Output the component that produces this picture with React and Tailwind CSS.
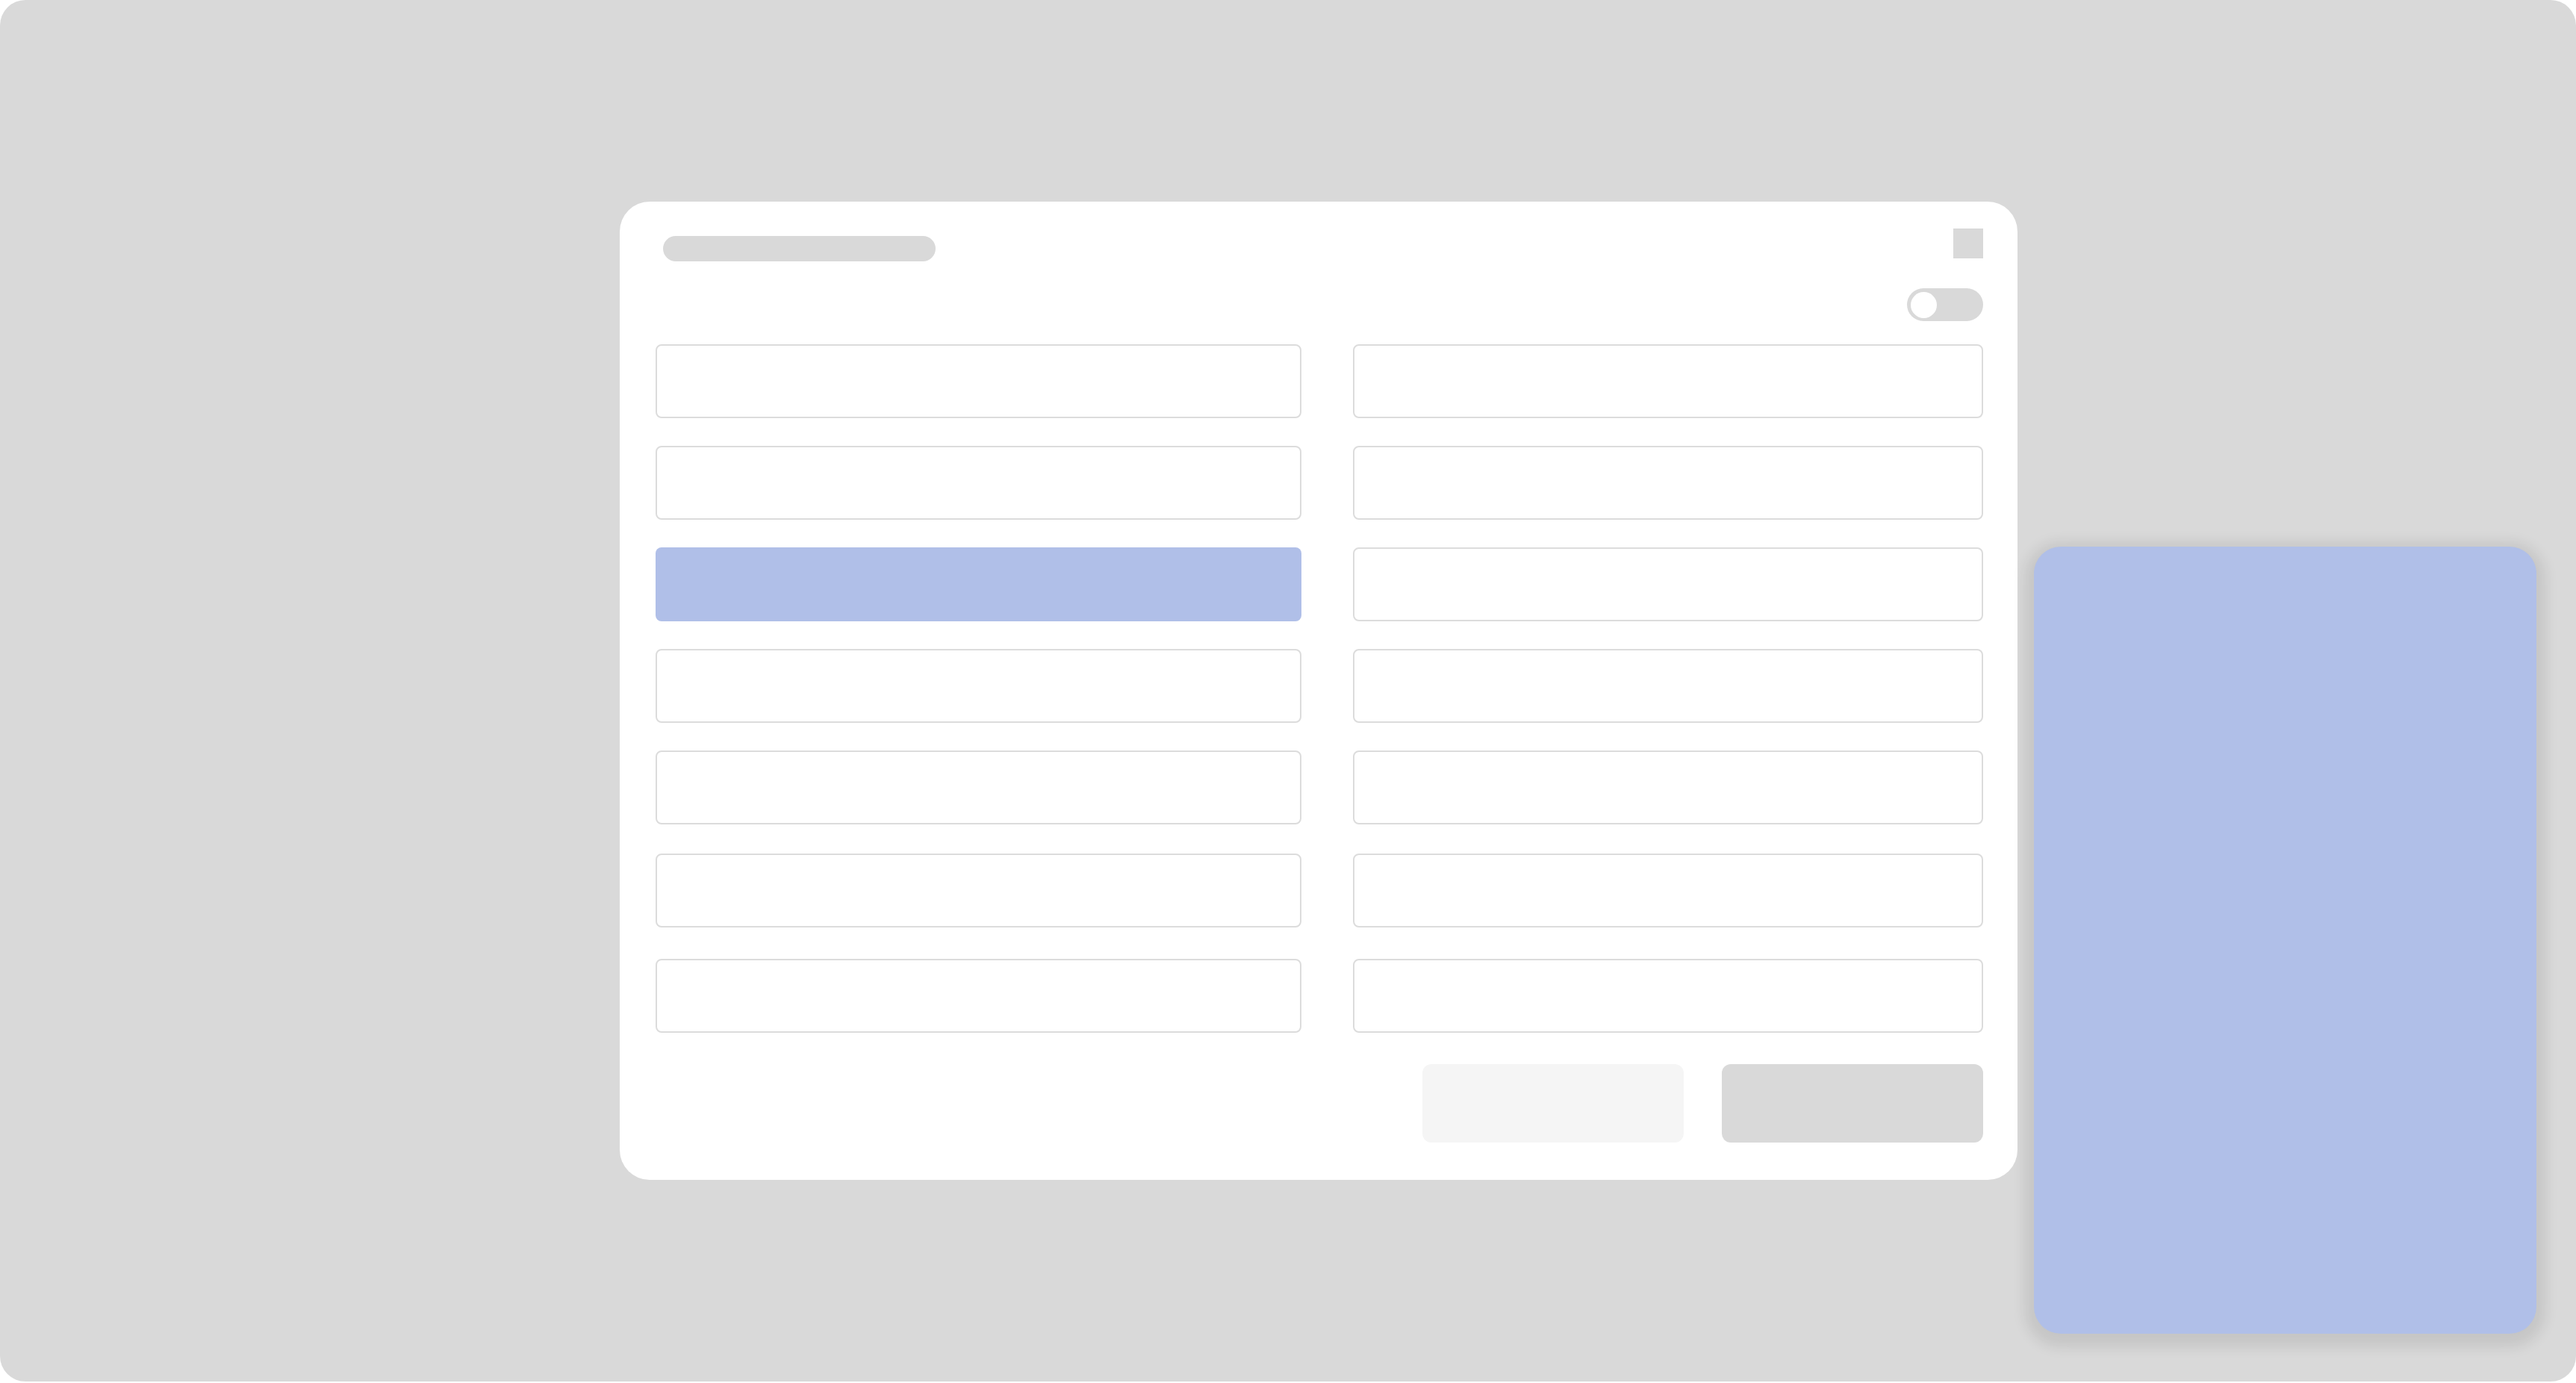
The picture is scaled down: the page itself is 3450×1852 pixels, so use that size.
export default function App() {
  const rows = [0, 1, 2, 3, 4, 5, 6];

  return (
    <div className="w-[3450px] h-[1852px] bg-white">
      <div className="w-[3450px] h-[1850px] bg-[#d9d9d9] rounded-[34px] flex items-start pt-[270px] pl-[830px]">
        {/* modal */}
        <div className="w-[1872px] h-[1310px] bg-white rounded-[40px] pl-[48px] pr-[46px] pt-[36px] flex flex-col">
          <div className="flex justify-between items-start">
            <div className="ml-[10px] mt-[10px] w-[365px] h-[34px] rounded-full bg-[#d9d9d9]" />
            <div className="w-[40px] h-[40px] bg-[#d9d9d9]" />
          </div>
          <div className="flex justify-end mt-[36px]">
            <div className="w-[102px] h-[44px] rounded-full bg-[#d9d9d9] pl-[5px] flex items-center">
              <div className="w-[35px] h-[35px] rounded-full bg-white" />
            </div>
          </div>

          <div className="mt-[31px] flex flex-col gap-y-[37px]">
            {rows.map((i) => (
              <div
                key={i}
                className={
                  "grid grid-cols-[865px_844px] gap-x-[69px] " +
                  (i === 5 ? "mt-[2px]" : i === 6 ? "mt-[5px]" : "")
                }
              >
                {i === 2 ? (
                  <div className="h-[99px] rounded-[8px] bg-[#b0bfe8]" />
                ) : (
                  <div className="h-[99px] rounded-[8px] border-2 border-[#dcdcdc] bg-white" />
                )}
                <div className="h-[99px] rounded-[8px] border-2 border-[#dcdcdc] bg-white" />
              </div>
            ))}
          </div>

          <div className="flex justify-end gap-[51px] mt-[42px]">
            <div className="w-[350px] h-[105px] rounded-[12px] bg-[#f5f5f5]" />
            <div className="w-[350px] h-[105px] rounded-[12px] bg-[#d9d9d9]" />
          </div>
        </div>

        {/* side panel */}
        <div className="ml-[22px] mt-[462px] w-[673px] h-[1054px] rounded-[36px] bg-[#b0bfe8] shadow-[0_6px_18px_12px_rgba(0,0,0,0.09)]" />
      </div>
    </div>
  );
}
